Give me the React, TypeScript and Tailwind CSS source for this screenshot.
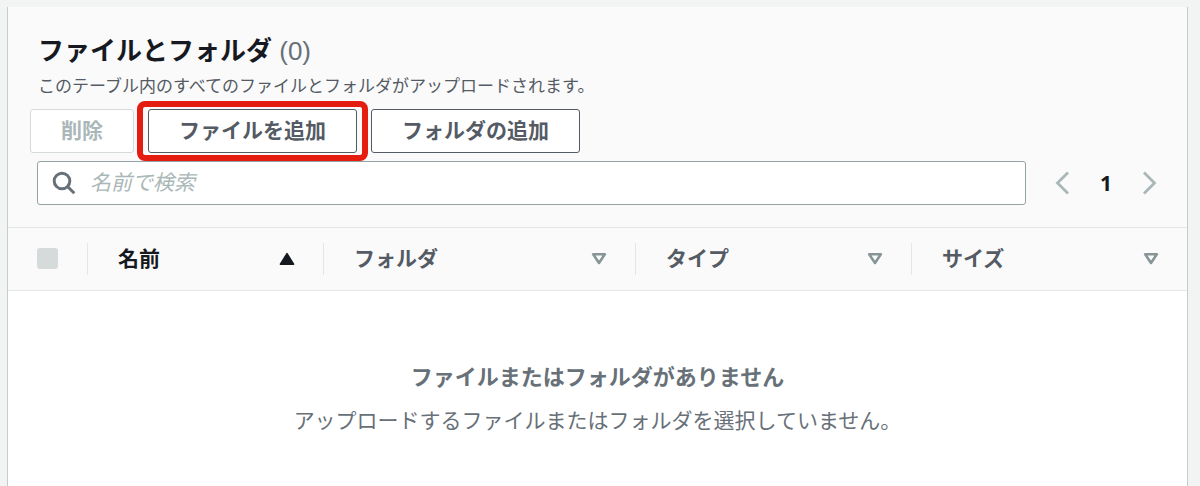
import { clsx } from "clsx";

const columns = [
  { label: "名前", width: "w-[236px]", sorted: true },
  { label: "フォルダ", width: "w-[312px]", sorted: false },
  { label: "タイプ", width: "", sorted: false },
  { label: "サイズ", width: "", sorted: false },
];

const SearchIcon = () => (
  <svg className="size-6 shrink-0" viewBox="0 0 24 24" fill="none" stroke="#687078" strokeWidth="3" aria-hidden="true">
    <circle cx="10" cy="10" r="7.8" />
    <path d="M15.5 15.5 22.3 22.3" />
  </svg>
);

const Chevron = ({ d }: { d: string }) => (
  <svg className="h-6 w-4" viewBox="0 0 16 24" fill="none" stroke="#aab7b8" strokeWidth="2.8" aria-hidden="true">
    <path d={d} />
  </svg>
);

const SortIcon = ({ sorted }: { sorted: boolean }) =>
  sorted ? (
    <svg className="h-3.5 w-4" viewBox="0 0 16 14" fill="#16191f" stroke="#16191f" strokeWidth="1.5" strokeLinejoin="round" aria-hidden="true">
      <path d="M8 1.6 14.6 12.2H1.4z" />
    </svg>
  ) : (
    <svg className="h-3.5 w-4" viewBox="0 0 16 14" fill="none" stroke="#879596" strokeWidth="2.6" strokeLinejoin="round" aria-hidden="true">
      <path d="M2.2 2.3h11.6L8 11z" />
    </svg>
  );

const buttonClass =
  "h-11 rounded-[3px] border border-[#545b64] bg-white px-[30px] text-[21px] leading-8 font-bold text-[#545b64] disabled:border-[#d5dbdb] disabled:text-[#aab7b8]";

const App = () => {
  return (
    <main className="min-h-screen bg-[#f2f3f3] pt-[7px] pr-3 pl-[7px] font-['Liberation_Sans','Noto_Sans_CJK_JP',sans-serif]">
      <section className="min-h-[calc(100vh-7px)] border-x border-[#c6cbcb] bg-white">
        {/* Header */}
        <div className="border-b border-[#e4e7e7] bg-[#fafafa] px-[22px] pt-6 pb-[22px]">
          <div className="px-2">
            <h2 className="text-[26px] leading-10 font-bold text-[#16191f]">
              ファイルとフォルダ <span className="font-normal text-[#687078]">(0)</span>
            </h2>
            <p className="text-[17px] leading-8 text-[#545b64]">
              このテーブル内のすべてのファイルとフォルダがアップロードされます。
            </p>
          </div>

          <div className="mt-[6px] flex">
            <button type="button" disabled className={buttonClass}>
              削除
            </button>
            <div className="relative mr-[14px] ml-[14px]">
              <button type="button" className={buttonClass}>
                ファイルを追加
              </button>
              <span className="pointer-events-none absolute -inset-x-[11px] -inset-y-2 rounded-lg border-[6px] border-[#e51c10]" />
            </div>
            <button type="button" className={buttonClass}>
              フォルダの追加
            </button>
          </div>

          <div className="mt-2 flex items-center px-[7px]">
            <label className="flex h-11 flex-1 items-center gap-[14px] rounded-[3px] border border-[#95a3a4] bg-white px-[14px]">
              <SearchIcon />
              <input
                type="text"
                aria-label="名前で検索"
                placeholder="名前で検索"
                className="w-full bg-transparent text-[21px] leading-8 text-[#16191f] outline-none placeholder:text-[#aab7b8] placeholder:italic"
              />
            </label>
            <nav className="ml-7 flex items-center gap-7" aria-label="ページ">
              <button type="button" aria-label="前のページ">
                <Chevron d="M14 1.5 3.5 12 14 22.5" />
              </button>
              <button type="button" className="w-4 font-['Noto_Sans',sans-serif] text-[21px] leading-8 font-bold text-[#16191f]">
                1
              </button>
              <button type="button" aria-label="次のページ">
                <Chevron d="M2 1.5 12.5 12 2 22.5" />
              </button>
            </nav>
          </div>
        </div>

        {/* File table */}
        <table className="w-full table-fixed border-collapse">
          <thead>
            <tr className="h-[62px] border-b border-[#e4e7e7] bg-[#fafafa]">
              <th className="w-[79px] p-0 pl-[29px] text-left">
                <input
                  type="checkbox"
                  disabled
                  aria-label="すべて選択"
                  className="block size-[21px] appearance-none rounded-[3px] bg-[#d5dbdb]"
                />
              </th>
              {columns.map((column) => (
                <th key={column.label} className={clsx("p-0 text-left", column.width)}>
                  <div
                    className={clsx(
                      "flex h-8 items-center justify-between border-l border-[#e4e7e7] pr-7 pl-[30px] text-[21px] leading-8 font-bold",
                      column.sorted ? "text-[#16191f]" : "text-[#545b64]",
                    )}
                  >
                    {column.label}
                    <SortIcon sorted={column.sorted} />
                  </div>
                </th>
              ))}
            </tr>
          </thead>
          <tbody>
            <tr>
              <td colSpan={5} className="px-0 pt-[71px] pb-12 text-center leading-8 text-[#687078]">
                <p className="text-[22px] font-bold">ファイルまたはフォルダがありません</p>
                <p className="mt-[11px] text-[21px]">アップロードするファイルまたはフォルダを選択していません。</p>
              </td>
            </tr>
          </tbody>
        </table>
      </section>
    </main>
  );
};

export default App;
